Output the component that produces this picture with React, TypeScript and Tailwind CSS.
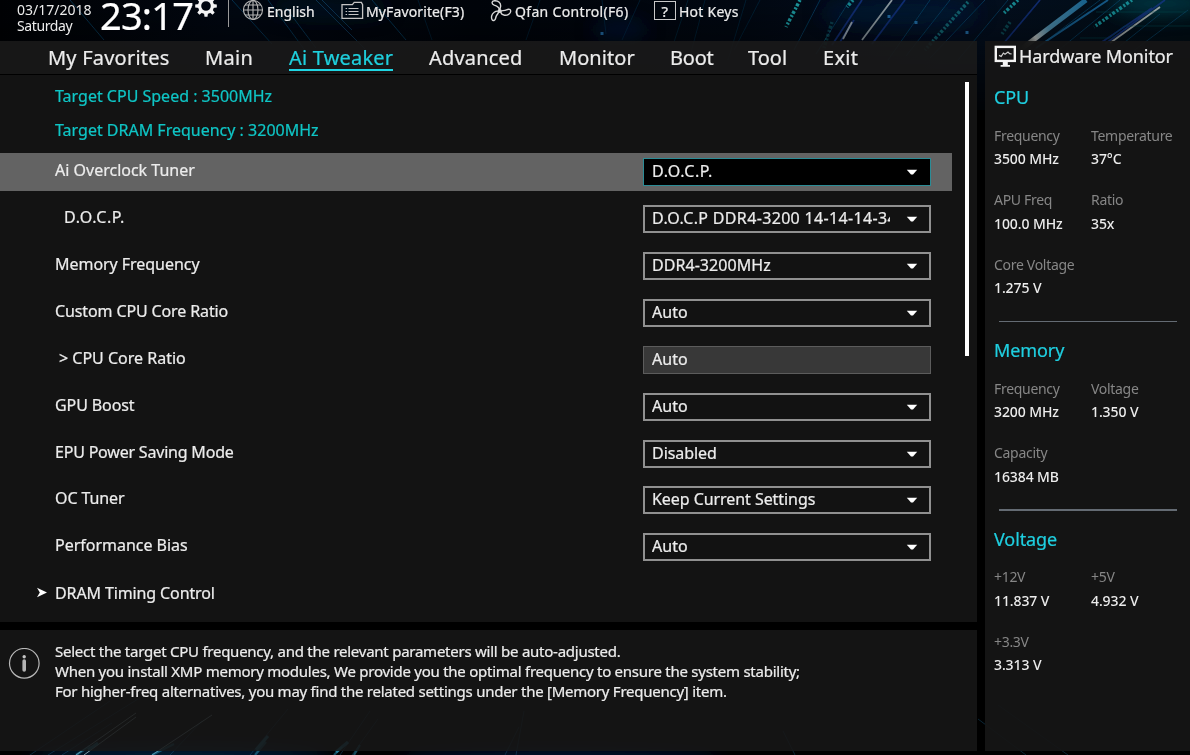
import type { ReactNode } from "react";

const tabs = [
  { label: "My Favorites", cls: "w-[157px] tracking-[0.22px]" },
  { label: "Main", cls: "w-[84px] tracking-[0.35px]" },
  { label: "Ai Tweaker", cls: "w-[140px] tracking-[0.2px]", active: true },
  { label: "Advanced", cls: "w-[130px] tracking-[0.2px]" },
  { label: "Monitor", cls: "w-[111px] tracking-[0.05px]" },
  { label: "Boot", cls: "w-[78px] tracking-[-0.2px]" },
  { label: "Tool", cls: "w-[75px]" },
  { label: "Exit", cls: "w-[60px] tracking-[0.3px]" },
];

type Setting = {
  label: string;
  value: string;
  indent?: string;
  labelTracking?: string;
  valueTracking?: string;
  active?: boolean;
  disabled?: boolean;
};

const settings: Setting[] = [
  { label: "Ai Overclock Tuner", value: "D.O.C.P.", labelTracking: "tracking-[0px]", valueTracking: "tracking-[0.6px]", active: true },
  { label: "D.O.C.P.", value: "D.O.C.P DDR4-3200 14-14-14-34-1T", indent: "pl-[64px]", labelTracking: "tracking-[0.6px]", valueTracking: "tracking-[0.34px]" },
  { label: "Memory Frequency", value: "DDR4-3200MHz", labelTracking: "tracking-[-0.04px]" },
  { label: "Custom CPU Core Ratio", value: "Auto", labelTracking: "tracking-[-0.12px]" },
  { label: "> CPU Core Ratio", value: "Auto", indent: "pl-[59px]", labelTracking: "tracking-[0px]", disabled: true },
  { label: "GPU Boost", value: "Auto" },
  { label: "EPU Power Saving Mode", value: "Disabled", labelTracking: "tracking-[-0.2px]", valueTracking: "tracking-[-0.05px]" },
  { label: "OC Tuner", value: "Keep Current Settings", valueTracking: "tracking-[-0.06px]" },
  { label: "Performance Bias", value: "Auto", labelTracking: "tracking-[-0.02px]" },
];

type Reading = [string, string];
const sections: { title: string; items: Reading[] }[] = [
  {
    title: "CPU",
    items: [["Frequency", "3500 MHz"], ["Temperature", "37°C"], ["APU Freq", "100.0 MHz"], ["Ratio", "35x"], ["Core Voltage", "1.275 V"]],
  },
  { title: "Memory", items: [["Frequency", "3200 MHz"], ["Voltage", "1.350 V"], ["Capacity", "16384 MB"]] },
  { title: "Voltage", items: [["+12V", "11.837 V"], ["+5V", "4.932 V"], ["+3.3V", "3.313 V"]] },
];

function Backdrop() {
  const dots = (x1: number, y1: number, x2: number, y2: number, o: number) => (
    <line x1={x1} y1={y1} x2={x2} y2={y2} stroke="#1b959c" strokeWidth="3.5" strokeDasharray="2 2 3 1.500" opacity={o} />
  );
  return (
    <svg className="absolute inset-0 h-full w-full" viewBox="0 0 1190 755" aria-hidden="true">
      <defs>
        <linearGradient id="sky" x1="0" x2="1">
          <stop offset="0" stopColor="#010205" />
          <stop offset="0.2" stopColor="#020812" />
          <stop offset="0.4" stopColor="#01040a" />
          <stop offset="0.62" stopColor="#020812" />
          <stop offset="0.8" stopColor="#040f20" />
          <stop offset="1" stopColor="#020e16" />
        </linearGradient>
        <linearGradient id="fade" x1="0" y1="0" x2="0" y2="1">
          <stop offset="0" stopColor="#000" stopOpacity="0" />
          <stop offset="1" stopColor="#000" stopOpacity="0.8" />
        </linearGradient>
        <linearGradient id="beam" gradientUnits="userSpaceOnUse" x1="1090" y1="0" x2="1020" y2="45">
          <stop offset="0" stopColor="#155f8a" />
          <stop offset="0.6" stopColor="#4b87a5" />
          <stop offset="0.8" stopColor="#b5bab9" />
          <stop offset="1" stopColor="#222" />
        </linearGradient>
        <filter id="soft" x="0" y="0" width="1" height="1"><feGaussianBlur stdDeviation="0.7" /></filter>
        <filter id="glow"><feGaussianBlur stdDeviation="9" /></filter>
      </defs>
      <rect width="1190" height="755" fill="#000" />
      <rect width="1190" height="110" fill="url(#sky)" />
      <g filter="url(#glow)">
        <ellipse cx="900" cy="14" rx="80" ry="16" fill="#051f45" opacity="0.55" />
        <ellipse cx="620" cy="30" rx="28" ry="10" fill="#06214a" opacity="0.55" />
        <ellipse cx="330" cy="10" rx="60" ry="10" fill="#052038" opacity="0.45" />
        <ellipse cx="1160" cy="4" rx="50" ry="12" fill="#05505e" opacity="0.6" />
        <ellipse cx="180" cy="756" rx="150" ry="10" fill="#06305a" opacity="0.7" />
        <ellipse cx="560" cy="760" rx="160" ry="9" fill="#052a66" opacity="0.6" />
      </g>
      <g filter="url(#soft)" fill="none">
        <g stroke="#0d4c74" strokeWidth="1">
          <path d="M70 0l34 40M232 0l40 44M268 0l44 60M316 0l52 52M322 0l30 30M372 0l34 40M286 8l30 40" opacity="0.6" />
          <path d="M418 0l14 40M540 0l-14 40M602 0l4 34M640 0l-18 40M688 0l-14 42M705 0l-16 60M746 0l-18 60M760 0l-26 50" opacity="0.3" />
          <path d="M820 0l-26 50M850 0l-34 54M930 0l-42 60M950 0l-44 56M985 0l-55 58M1008 0l-50 60M1100 0l-66 50M1120 0l-66 54M1188 10l-80 60M1160 14l-50 40" opacity="0.6" />
        </g>
        <path d="M862 0l-30 45M854 20l-14 22M905 0l-33 44M1152 8l-50 34M1165 0l-60 44M1040 0l-52 62" stroke="#17378f" strokeWidth="1.800" opacity="0.7" />
        <path d="M892 0l-30 40M852 22l-9 17" stroke="#a5b0b4" strokeWidth="1.800" opacity="0.85" />
        <path d="M1160 7l-50 36" stroke="#c5cac8" strokeWidth="1.800" opacity="0.8" />
        <path d="M1086 0l-66 50" stroke="url(#beam)" strokeWidth="5" />
        <path d="M1108 0l-72 48" stroke="#1a6aa0" strokeWidth="2" opacity="0.8" />
        <path d="M1080 38h30l14-12h66M1096 12h90" stroke="#0a5358" opacity="0.45" />
        {dots(800, 0, 786, 27, 1)}
        {dots(832, 22, 824, 48, 0.35)}
        {dots(853, 0, 847, 7, 0.9)}
        {dots(968, 2, 925, 50, 0.6)}
        {dots(1018, 0, 1003, 14, 0.9)}
        {dots(1132, 0, 1094, 27, 0.9)}
        {dots(1010, 22, 1002, 34, 0.4)}
        <path d="M889 15v3M916 21v3M967 31v3M602 32v3" stroke="#2e8bd0" strokeWidth="3" opacity="0.7" />
        <g stroke="#1c5f87">
          <path d="M30 755l80-54M48 755l90-56M62 755l50-32M170 755l32-34M340 755l30-44M352 755l26-36M250 755l38-46M505 755l14-28M516 755l8-44M795 755l-12-24M1026 755l-48-36M1068 755l-70-50" opacity="0.4" />
          <path d="M76 755l60-42M152 755l60-40M84 755l52-38" stroke="#9fbbc4" opacity="0.8" />
          <path d="M76 755l14-9M152 755l22-11M255 755l11-13M334 755l8-8M354 755l6-10" stroke="#2893b8" strokeWidth="2.200" opacity="0.5" />
          <path d="M88 750l10-7M256 750l12-14M336 752l12-10" stroke="#2893b8" strokeWidth="3" opacity="0.7" />
        </g>
      </g>
      <rect y="0" width="1190" height="110" fill="url(#fade)" />
    </svg>
  );
}

function Gear() {
  return (
    <svg className="h-[22px] w-[22px]" viewBox="-11 -11 22 22" fill="#f4f4f4" aria-hidden="true">
      <path
        fillRule="evenodd"
        d="M0-8a8 8 0 1 0 0 16a8 8 0 1 0 0-16zM0-4.800a4.800 4.800 0 1 1 0 9.600a4.800 4.800 0 1 1 0-9.600z"
      />
      <path d="M-2-7l.5-3.800h3l.5 3.800zM-2 7l.5 3.800h3l.5-3.800zM7-2l3.800.5v3l-3.800.5zM-7-2l-3.800.5v3l3.800.5z" />
      <path transform="rotate(45)" d="M-2-7l.5-3.800h3l.5 3.800zM-2 7l.5 3.800h3l.5-3.800zM7-2l3.800.5v3l-3.800.5zM-7-2l-3.800.5v3l3.800.5z" />
    </svg>
  );
}

function Globe() {
  return (
    <svg className="h-[21px] w-[21px]" viewBox="0 0 21 21" fill="none" stroke="#b4b4b4" strokeWidth="1.1" aria-hidden="true">
      <circle cx="10" cy="10" r="9.500" />
      <ellipse cx="10" cy="10" rx="5" ry="9.500" />
      <path d="M10 .5v19M.5 10h19M2.200 5h15.600M2.200 15h15.600" />
    </svg>
  );
}

function FolderList() {
  return (
    <svg className="h-[20px] w-[23px]" viewBox="0 0 23 20" fill="none" stroke="#c4c4c4" strokeWidth="1.300" aria-hidden="true">
      <path d="M1 18.300V4.600h10.400l1.800-2.200h7.200l1.200 2.200v13.700z" />
      <path d="M7.500 8.500h10M7.500 11.500h10M7.500 14.500h10M4.600 8.500h1.500M4.600 11.500h1.500M4.600 14.500h1.500" strokeWidth="1" />
    </svg>
  );
}

function Fan() {
  return (
    <svg className="h-[22px] w-[22px]" viewBox="0 0 22 22" fill="none" stroke="#d8d8d8" strokeWidth="1.400" strokeLinejoin="round" aria-hidden="true">
      <path d="M9.200 10.200C9.800 7.800 7.500 6.400 4.200 5.200C1.200 4 1.500.9 4.400.7C8.500.5 11 3 10.600 6.500C10.400 8.400 10 9.400 9.200 10.200z" />
      <path d="M8.200 11.200C5.800 10.600 2.200 12.800 1.600 16.200C1.100 19.300 2.400 20.900 4 20.500C6 20 5.300 17.600 6.500 15.600C7.600 13.800 9.200 13.200 8.200 11.200z" />
      <path d="M10.800 11C12.500 10.500 14.500 10.800 16.500 9.800C18.800 8.700 20.800 9.200 20.700 11.200C20.600 13.800 17.400 15.600 14.500 15.200C12 14.800 10.600 13 10.800 11z" />
      <circle cx="9.700" cy="10.900" r="1.300" fill="#d8d8d8" />
    </svg>
  );
}

function MonitorIcon() {
  return (
    <svg className="h-[22px] w-[22px]" viewBox="0 0 22 22" aria-hidden="true">
      <rect x="1.800" y="1.900" width="19" height="14" fill="none" stroke="#f4f4f4" strokeWidth="2.400" />
      <path d="M8.800 17h5v3H16v1.800H6.600V20h2.200z" fill="#f4f4f4" />
      <path d="M5 10.400l2.200 1 2.200-3.400 1.600 1.200 3-2.200 1.600 1.600 2 .4" fill="none" stroke="#d0d0d0" strokeWidth="1.200" />
    </svg>
  );
}

function Tool({ icon, className, children }: { icon: ReactNode; className: string; children: ReactNode }) {
  return (
    <div className={`flex shrink-0 items-start ${className}`}>
      {icon}
      <span className="pt-[2px] leading-[20px]">{children}</span>
    </div>
  );
}

function Select({ value, active, disabled, valueTracking }: Setting) {
  const look = active
    ? "border border-[#2b8c96] bg-black pl-[8px]"
    : disabled
      ? "border border-[#5c5c5c] bg-[#383838] pl-[8px]"
      : "border-2 border-[#909090] bg-[#121212] pl-[7px]";
  return (
    <div className={`flex h-[28px] w-[288px] shrink-0 items-center ${look}`}>
      <span className={`w-[238px] overflow-hidden pb-[2px] leading-[22px] whitespace-nowrap ${valueTracking ?? "tracking-[0.05px]"}`}>
        {value}
      </span>
      {!disabled && (
        <svg className="ml-[16px] h-[6px] w-[12px]" viewBox="0 0 12 6" fill="#fff" aria-hidden="true">
          <path d="M.8.8h10.400L7 5.400H5z" />
        </svg>
      )}
    </div>
  );
}

export default function App() {
  return (
    <div className="relative h-[755px] w-[1190px] overflow-hidden bg-black font-['Noto_Sans',sans-serif] text-[#ececec] [-webkit-text-stroke:0.22px]">
      <Backdrop />
      <div className="relative flex h-full flex-col">
        <header className="flex h-[41px] shrink-0 items-start text-[14px] whitespace-nowrap">
          <div className="w-[83px] shrink-0 pt-[2px] pl-[17px] leading-[16px] [-webkit-text-stroke:0px]">
            <div>03/17/2018</div>
            <div className="tracking-[-0.4px]">Saturday</div>
          </div>
          <div className="-mt-[9px] w-[95px] shrink-0 pl-[17px] text-[38px] leading-[49px] tracking-[-0.8px] text-white">23:17</div>
          <div className="-mt-[5px] ml-[17px] w-[33px] shrink-0"><Gear /></div>
          <div className="mr-[14px] h-[27px] w-px shrink-0 bg-[#9a9a9a]" />
          <Tool icon={<Globe />} className="w-[98px] gap-[3px]">English</Tool>
          <Tool icon={<FolderList />} className="w-[149px] gap-[2px] tracking-[0.12px]">MyFavorite(F3)</Tool>
          <Tool icon={<Fan />} className="w-[164px] gap-[3px] tracking-[0.33px]">Qfan Control(F6)</Tool>
          <Tool
            icon={<span className="mt-[1px] grid h-[19px] w-[22px] place-items-center border border-[#c8c8c8] text-[15px] leading-[16px]">?</span>}
            className="gap-[3px] tracking-[0.25px]"
          >
            Hot Keys
          </Tool>
        </header>

        <div className="flex h-[710px] shrink-0 gap-[8px]">
          <div className="flex w-[977px] flex-col gap-[8px]">
            <main className="flex h-[581px] flex-col">
              <nav className="flex h-[34px] border-b border-black bg-[#1a1a1a]/88 pl-[48px] text-[20px] leading-[27px] whitespace-nowrap">
                {tabs.map((t) => (
                  <div key={t.label} className={`shrink-0 pt-[3px] ${t.cls}`}>
                    <span className={t.active ? "inline-block h-[27px] border-b-2 border-[#1fd5e3] text-[#1fd0de]" : ""}>{t.label}</span>
                  </div>
                ))}
              </nav>
              <div className="flex grow bg-[#131313]/98 text-[16px]">
                <div className="w-[965px]">
                  <div className="flex h-[78px] flex-col gap-[12px] pt-[10px] pl-[55px] leading-[22px] text-[#0fc5c5]">
                    <div>Target CPU Speed : 3500MHz</div>
                    <div>Target DRAM Frequency : 3200MHz</div>
                  </div>
                  <div className="flex flex-col gap-[8.930px]">
                    {settings.map((s) => (
                      <div
                        key={s.label}
                        className={`flex h-[38px] w-[952px] items-center justify-between pr-[21px] ${s.indent ?? "pl-[55px]"} ${s.active ? "bg-[#636363]" : ""}`}
                      >
                        <span className={`pb-[4px] leading-[22px] ${s.labelTracking ?? "tracking-[-0.1px]"}`}>{s.label}</span>
                        <Select {...s} />
                      </div>
                    ))}
                    <div className="flex h-[38px] items-center gap-[8px] pl-[37px]">
                      <svg className="mb-[3px] h-[11px] w-[10px]" viewBox="0 0 10 11" fill="#fff" aria-hidden="true">
                        <path d="M0 .8L10 5.500L0 10.200L2.800 5.500z" />
                      </svg>
                      <span className="pb-[3px] leading-[22px] tracking-[-0.12px]">DRAM Timing Control</span>
                    </div>
                  </div>
                </div>
                <div className="mt-[7px] h-[274px] w-[4px] bg-white" />
              </div>
            </main>

            <section className="flex h-[121px] bg-[#171717]/88">
              <div className="w-[55px] shrink-0 pt-[18px] pl-[8px]">
                <svg className="h-[32px] w-[32px]" viewBox="0 0 32 32" fill="none" aria-hidden="true">
                  <circle cx="16.300" cy="15.300" r="14.800" stroke="#b9b9b9" strokeWidth="1.200" />
                  <circle cx="16.200" cy="8.700" r="1.700" fill="#c4c4c4" />
                  <path d="M16.200 13v9" stroke="#b4b4b4" strokeWidth="3.600" strokeLinecap="round" />
                </svg>
              </div>
              <p className="pt-[11px] text-[15px] leading-[20px] tracking-[-0.25px] whitespace-nowrap">
                Select the target CPU frequency, and the relevant parameters will be auto-adjusted.
                <br />
                When you install XMP memory modules, We provide you the optimal frequency to ensure the system stability;
                <br />
                For higher-freq alternatives, you may find the related settings under the [Memory Frequency] item.
              </p>
            </section>
          </div>

          <aside className="w-[205px] bg-[#151515]/93 pl-[9px]">
            <div className="flex h-[43px] items-start gap-[3px] pt-[4px] text-[18px] leading-[23px] tracking-[-0.1px] whitespace-nowrap">
              <MonitorIcon />
              <span>Hardware Monitor</span>
            </div>
            {sections.map((s, i) => (
              <section key={s.title}>
                {i > 0 && <div className="mt-[21px] mb-[15px] ml-[5px] h-[1.500px] w-[178px] bg-[#646b73]" />}
                <h2 className="h-[26px] text-[18px] leading-[26px] tracking-[-0.1px] text-[#1fcfe0]">{s.title}</h2>
                <div className="mt-[13.500px] grid grid-cols-[97px_97px] gap-y-[17.500px] text-[14px] leading-[23.500px] whitespace-nowrap">
                  {s.items.map(([k, v]) => (
                    <div key={k}>
                      <div className="tracking-[-0.3px] text-[#868686] [-webkit-text-stroke:0px]">{k}</div>
                      <div className="font-medium tracking-[-0.1px] [-webkit-text-stroke:0px]">{v}</div>
                    </div>
                  ))}
                </div>
              </section>
            ))}
          </aside>
        </div>
      </div>
    </div>
  );
}
